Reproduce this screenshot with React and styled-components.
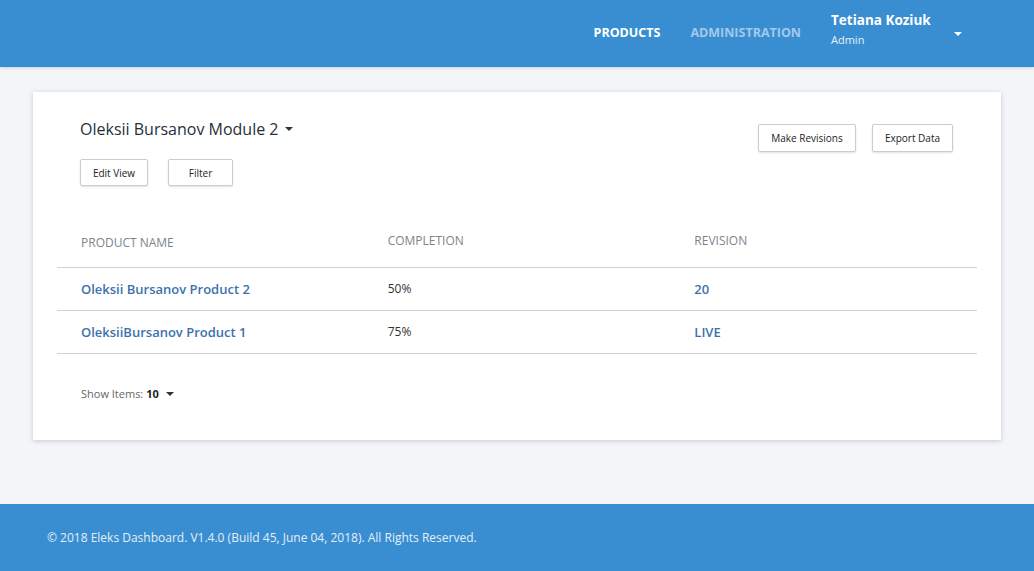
import React from "react";
import styled, { createGlobalStyle } from "styled-components";

const Global = createGlobalStyle`
	html, body { margin: 0; padding: 0; }
	body {
		font-family: "Open Sans", "Noto Sans", sans-serif;
		background: #f4f5f8;
		color: #333;
	}
	#root { min-height: 571px; display: flex; flex-direction: column; }
`;

const rows = [
	{ name: "Oleksii Bursanov Product 2", completion: "50%", revision: "20" },
	{ name: "OleksiiBursanov Product 1", completion: "75%", revision: "LIVE" },
];

function Caret({ color = "#333" }) {
	return (
		<svg width="8" height="4" viewBox="0 0 8 4">
			<path d="M0 0 L8 0 L4 4 Z" fill={color} />
		</svg>
	);
}

export default function App() {
	return (
		<>
			<Global />
			<Header>
				<Nav>
					<NavLink $active>PRODUCTS</NavLink>
					<NavLink>ADMINISTRATION</NavLink>
				</Nav>
				<User>
					<UserText>
						<UserName>Tetiana Koziuk</UserName>
						<UserRole>Admin</UserRole>
					</UserText>
					<Caret color="#fff" />
				</User>
			</Header>
			<Main>
				<Card>
					<Top>
						<div>
							<Title>
								Oleksii Bursanov Module 2 <Caret />
							</Title>
							<ButtonRow>
								<Button $w={68}>Edit View</Button>
								<Button $w={65}>Filter</Button>
							</ButtonRow>
						</div>
						<Actions>
							<Button $w={98} $h={28}>Make Revisions</Button>
							<Button $w={81} $h={28}>Export Data</Button>
						</Actions>
					</Top>
					<Table>
						<HeadRow>
							<HeadCell $off={-2}>PRODUCT NAME</HeadCell>
							<HeadCell>COMPLETION</HeadCell>
							<HeadCell>REVISION</HeadCell>
						</HeadRow>
						{rows.map((r) => (
							<Row key={r.name}>
								<LinkCell>{r.name}</LinkCell>
								<Cell>{r.completion}</Cell>
								<LinkCell>{r.revision}</LinkCell>
							</Row>
						))}
					</Table>
					<ShowItems>
						Show Items: <b>10</b>
						<Caret />
					</ShowItems>
				</Card>
			</Main>
			<Footer>© 2018 Eleks Dashboard. V1.4.0 (Build 45, June 04, 2018). All Rights Reserved.</Footer>
		</>
	);
}

const Header = styled.header`
	height: 67px;
	background: #398ed1;
	display: flex;
	align-items: center;
	justify-content: flex-end;
	padding-right: 72px;
	box-shadow: 0 1px 3px rgba(0, 0, 0, 0.15);
`;
const Nav = styled.nav`
	display: flex;
	gap: 30px;
	margin-right: 30px;
	padding-bottom: 2px;
`;
const NavLink = styled.a`
	font-size: 12.5px;
	font-weight: 700;
	color: ${(p) => (p.$active ? "#fff" : "#a3c8ea")};
`;
const User = styled.div`
	display: flex;
	align-items: center;
	gap: 22px;
	color: #fff;
`;
const UserText = styled.div`
	display: flex;
	flex-direction: column;
	width: 101px;
	white-space: nowrap;
	padding-bottom: 8px;
`;
const UserName = styled.span`
	font-size: 13.5px;
	font-weight: 700;
	line-height: 19px;
`;
const UserRole = styled.span`
	font-size: 11px;
	line-height: 16px;
	color: #e6f0fa;
	margin-top: 2px;
`;
const Main = styled.main`
	flex: 1;
	padding: 25px 33px 64px;
`;
const Card = styled.section`
	background: #fff;
	box-shadow: 0 1px 5px rgba(0, 0, 0, 0.18);
	padding: 25px 24px 38px;
	height: 348px;
	box-sizing: border-box;
`;
const Top = styled.div`
	display: flex;
	justify-content: space-between;
	padding: 0 24px 0 23px;
`;
const Title = styled.h1`
	margin: 0;
	font-size: 16px;
	font-weight: 400;
	color: #262f3a;
	display: flex;
	align-items: center;
	gap: 7px;
	height: 24px;
`;
const ButtonRow = styled.div`
	display: flex;
	gap: 20px;
	margin-top: 18px;
`;
const Actions = styled.div`
	display: flex;
	gap: 16px;
	padding-top: 7px;
`;
const Button = styled.button`
	width: ${(p) => p.$w}px;
	height: ${(p) => p.$h || 27}px;
	background: #fff;
	border: 1px solid #c9cdd2;
	border-radius: 2px;
	box-shadow: 0 1px 2px rgba(0, 0, 0, 0.12);
	font-family: inherit;
	font-size: 10px;
	color: #222;
	padding: 0;
`;
const Table = styled.div`
	margin-top: 33px;
`;
const HeadRow = styled.div`
	display: grid;
	grid-template-columns: repeat(3, 1fr);
	height: 48px;
	border-bottom: 1px solid #cfd2d8;
	align-items: center;
`;
const HeadCell = styled.div`
	padding-left: 24px;
	font-size: 12px;
	color: #7e848b;
	margin-top: ${(p) => (p.$off !== undefined ? p.$off : -6)}px;
`;
const Row = styled.div`
	display: grid;
	grid-template-columns: repeat(3, 1fr);
	height: 42px;
	border-bottom: 1px solid #cfd2d8;
	align-items: center;
`;
const Cell = styled.div`
	padding-left: 24px;
	font-size: 12px;
	color: #333;
	margin-top: -2px;
`;
const LinkCell = styled.a`
	padding-left: 24px;
	font-size: 13px;
	font-weight: 600;
	color: #3c72ac;
`;
const ShowItems = styled.div`
	margin-top: 32px;
	padding-left: 24px;
	font-size: 11px;
	color: #666;
	display: flex;
	align-items: center;
	gap: 3px;
	b {
		color: #222;
		margin-right: 4px;
	}
`;
const Footer = styled.footer`
	height: 67px;
	background: #398ed1;
	color: #e3eef9;
	font-size: 12px;
	display: flex;
	align-items: center;
	padding-left: 47px;
`;
